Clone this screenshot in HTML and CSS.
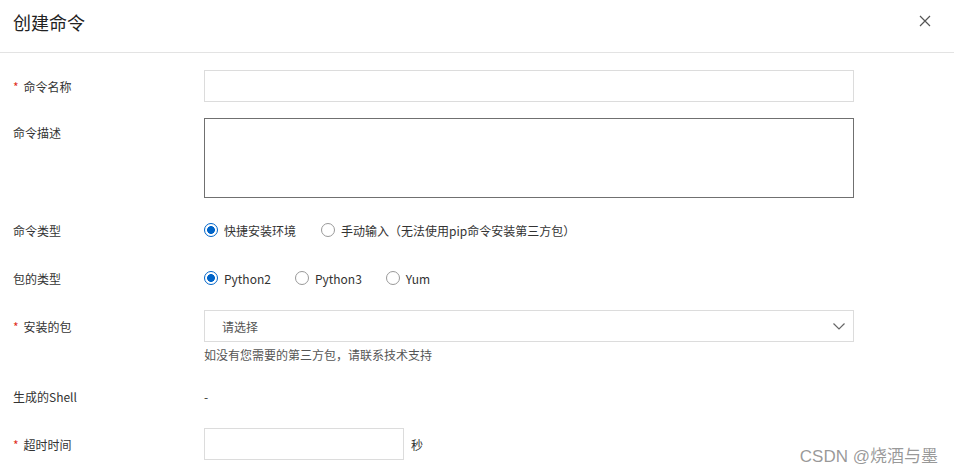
FILE: index.html
```html
<!DOCTYPE html>
<html lang="zh">
<head>
<meta charset="utf-8">
<link rel="stylesheet" href="styles.css">
</head>
<body>
<div class="dialog">
  <div class="header">
    <div class="title">创建命令</div>
    <svg class="close" width="12" height="12" viewBox="0 0 12 12"><path d="M1 1L11 11M11 1L1 11" stroke="#555" stroke-width="1.2" fill="none"/></svg>
  </div>
  <div class="form">
    <div class="row">
      <div class="label"><span class="req">*</span>命令名称</div>
      <div class="ctrl"><div class="input full"></div></div>
    </div>
    <div class="row">
      <div class="label top">命令描述</div>
      <div class="ctrl"><div class="textarea"></div></div>
    </div>
    <div class="row">
      <div class="label">命令类型</div>
      <div class="ctrl radios">
        <label class="radio on"><span class="dot"></span>快捷安装环境</label>
        <label class="radio gap-lg"><span class="dot"></span>手动输入（无法使用pip命令安装第三方包）</label>
      </div>
    </div>
    <div class="row">
      <div class="label">包的类型</div>
      <div class="ctrl radios">
        <label class="radio wide on"><span class="dot"></span>Python2</label>
        <label class="radio wide"><span class="dot"></span>Python3</label>
        <label class="radio wide"><span class="dot"></span>Yum</label>
      </div>
    </div>
    <div class="row">
      <div class="label"><span class="req">*</span>安装的包</div>
      <div class="ctrl col">
        <div class="select"><span class="ph">请选择</span>
          <svg width="12" height="7" viewBox="0 0 12 7"><path d="M0.5 0.5L6 6L11.5 0.5" stroke="#666" stroke-width="1.2" fill="none"/></svg>
        </div>
        <div class="help">如没有您需要的第三方包，请联系技术支持</div>
      </div>
    </div>
    <div class="row">
      <div class="label">生成的Shell</div>
      <div class="ctrl">-</div>
    </div>
    <div class="row">
      <div class="label"><span class="req">*</span>超时时间</div>
      <div class="ctrl"><div class="input short"></div><span class="unit">秒</span></div>
    </div>
  </div>
  <div class="wm">CSDN @烧酒与墨</div>
</div>
</body>
</html>
```
FILE: styles.css
```css
* { box-sizing: border-box; }
html, body { margin: 0; padding: 0; background: #fff; }
body {
  font-family: "Noto Sans CJK SC", "Noto Sans", sans-serif;
  color: #333;
  font-size: 12px;
}
.dialog { position: relative; width: 954px; height: 474px; overflow: hidden; }
.header {
  height: 54px;
  border-bottom: 1px solid #e3e3e3;
  display: flex;
  align-items: center;
  justify-content: space-between;
  padding: 0 23px 0 13px;
  margin-top: -1px;
}
.title { font-size: 18px; color: #222; line-height: 24px; margin-top: -8px; }
.close { margin-top: -10px; }
.form {
  display: flex;
  flex-direction: column;
  gap: 16px;
  padding-top: 17px;
}
.row {
  display: grid;
  grid-template-columns: 204px 650px;
  align-items: start;
}
.label {
  padding-left: 13px;
  height: 32px;
  display: flex;
  align-items: center;
  color: #333;
}
.label.top { height: auto; padding-top: 6px; line-height: 18px; }
.req { color: #e0301e; margin-right: 5px; font-size: 12px; }
.ctrl { min-height: 32px; display: flex; align-items: center; }
.ctrl.col { flex-direction: column; align-items: stretch; }
.input { height: 32px; border: 1px solid #dcdcdc; background: #fff; }
.input.full { width: 650px; }
.input.short { width: 200px; }
.textarea { width: 650px; height: 80px; border: 1px solid #707070; }
.radios { gap: 0; }
.radio { display: flex; align-items: center; margin-right: 21px; color: #333; }
.radio.wide { margin-right: 24px; }
.radio.gap-lg { margin-left: 4px; }
.dot {
  width: 14px; height: 14px;
  border: 1px solid #999;
  border-radius: 50%;
  margin-right: 6px;
  box-sizing: border-box;
  background: #fff;
}
.radio.on .dot {
  border: 1px solid #0064c8;
  background: radial-gradient(circle, #0064c8 0 3.6px, #fff 4.2px);
}
.select {
  height: 32px;
  width: 650px;
  border: 1px solid #dcdcdc;
  display: flex;
  align-items: center;
  justify-content: space-between;
  padding: 0 8px 0 17px;
}
.ph { color: #555; }
.help { color: #555; line-height: 19px; margin-top: 3px; }
.unit { margin-left: 7px; }
.wm {
  position: absolute;
  right: 16px;
  bottom: 7px;
  font-family: "Liberation Sans", "Noto Sans CJK SC", sans-serif;
  font-size: 17px;
  color: rgba(120,120,120,0.75);
}
```
